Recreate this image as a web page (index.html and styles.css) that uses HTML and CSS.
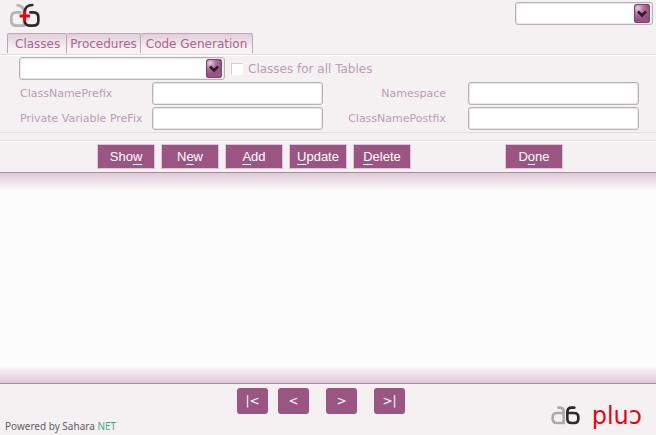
FILE: index.html
```html
<!DOCTYPE html>
<html lang="en">
<head>
<meta charset="utf-8">
<title>a6 plus</title>
<link rel="stylesheet" href="styles.css">
</head>
<body>
<header class="header">
  <svg class="brand" viewBox="0 0 96 78" width="32" height="26" fill="none" stroke-width="8" stroke-linecap="round" aria-hidden="true">
    <path stroke="#b4b4b4" d="M26 7C37 8 45 15 45 28V68H24Q7 68 7 54V43Q7 28 22 28H34"/>
    <path stroke="#2b2b2b" d="M70 6C56 6 47 15 47 28V52Q47 68 62 68H72Q88 68 88 54V43Q88 28 73 28H64"/>
    <path stroke="#e30613" stroke-width="9" stroke-linecap="butt" d="M32 39H63M47 24V54"/>
  </svg>
  <div class="combo combo-top">
    <select aria-label="Connection"><option></option></select>
    <span class="arrow"><svg viewBox="0 0 16 19" width="16" height="19" fill="none" aria-hidden="true"><path d="M4 7.500L8 11.500L12 7.500" stroke="#2b1a27" stroke-width="2.600"/></svg></span>
  </div>
</header>
<nav class="tabs">
  <button class="tab" type="button">Classes</button>
  <button class="tab" type="button">Procedures</button>
  <button class="tab" type="button">Code Generation</button>
</nav>
<form class="panel">
  <div class="source">
    <div class="combo combo-table">
      <select aria-label="Table"><option></option></select>
      <span class="arrow"><svg viewBox="0 0 16 19" width="16" height="19" fill="none" aria-hidden="true"><path d="M4 7.500L8 11.500L12 7.500" stroke="#2b1a27" stroke-width="2.600"/></svg></span>
    </div>
    <input class="check" type="checkbox" id="all">
    <label for="all">Classes for all Tables</label>
  </div>
  <div class="fields">
    <label for="prefix">ClassNamePrefix</label>
    <input class="text" id="prefix" type="text">
    <label class="right" for="ns">Namespace</label>
    <input class="text" id="ns" type="text">
    <label for="private">Private Variable PreFix</label>
    <input class="text" id="private" type="text">
    <label class="right" for="postfix">ClassNamePostfix</label>
    <input class="text" id="postfix" type="text">
  </div>
</form>
<div class="toolbar">
  <button class="action" type="button">Sho<u>w</u></button>
  <button class="action" type="button">N<u>e</u>w</button>
  <button class="action" type="button"><u>A</u>dd</button>
  <button class="action" type="button"><u>U</u>pdate</button>
  <button class="action" type="button"><u>D</u>elete</button>
  <button class="action done" type="button">D<u>o</u>ne</button>
</div>
<main class="canvas"></main>
<footer class="footer">
  <p class="credit">Powered by Sahara <span>NET</span></p>
  <div class="pager">
    <button class="page" type="button">|&lt;</button>
    <button class="page" type="button">&lt;</button>
    <button class="page next" type="button">&gt;</button>
    <button class="page next" type="button">&gt;|</button>
  </div>
  <div class="wordmark">
    <svg viewBox="0 0 87 57" width="29" height="19" fill="none" stroke-width="8" stroke-linecap="round" aria-hidden="true">
      <path stroke="#aaa" d="M22 5H26Q38 5 38 17V51H18Q5 51 5 38V34Q5 21 18 21H36"/>
      <path stroke="#2b2b2b" d="M70 5H62Q49 5 49 18V38Q49 51 62 51H69Q82 51 82 38V34Q82 21 69 21H51"/>
    </svg>
    <span>pluɔ</span>
  </div>
</footer>
</body>
</html>
```

FILE: styles.css
```css
* { box-sizing: border-box; }

body {
  margin: 0;
  min-height: 100vh;
  display: flex;
  flex-direction: column;
  background: #f5f1f3;
  color: #bd9bb3;
  font: 12px/14px "DejaVu Sans", sans-serif;
}

button, select, input { font: inherit; margin: 0; }

.header {
  display: flex;
  justify-content: space-between;
  align-items: flex-start;
  height: 33px;
  padding: 2px 3px 0 9px;
}

.brand { margin-top: 1px; }

.combo { position: relative; height: 23px; }
.combo-top { width: 138px; }
.combo-table { width: 206px; }

.combo select, .text {
  display: block;
  width: 100%;
  height: 23px;
  padding: 0 4px;
  border: 1px solid #b5b3b5;
  border-radius: 3px;
  background: #fff;
  box-shadow: inset 0 0 1px 1px #e6e4e6;
  appearance: none;
}

.arrow {
  position: absolute;
  top: 2px;
  right: 3px;
  height: 19px;
  border-radius: 3px;
  background: radial-gradient(circle at 4px 4px, #e6cede 0, #a9719a 6px, #9a5284 11px);
  box-shadow: inset 0 0 0 1px #74486a;
  pointer-events: none;
}

.arrow svg { display: block; }

.tabs {
  display: flex;
  height: 22px;
  padding-left: 7px;
  border-bottom: 1px solid #e8d9e1;
}

.tab {
  height: 20px;
  padding: 0 3px;
  border: 1px solid #b9a9b4;
  border-bottom: 0;
  border-left-width: 0;
  border-radius: 2px 2px 0 0;
  background: linear-gradient(#e2cdda, #f8f4f6 80%);
  color: #a8648f;
}

.tab:first-child { padding: 0 6px 0 7px; border-left-width: 1px; }
.tab:last-child { padding: 0 5px; }

.panel {
  padding: 1px 17px 2px 20px;
  border-top: 1px solid #fff;
  border-bottom: 1px solid #e6d9e1;
}

.source { display: flex; align-items: center; margin-left: -1px; }

.check {
  appearance: none;
  width: 12px;
  height: 12px;
  margin: 0 5px 0 6px;
  border: 1px solid #fff;
  border-top-color: #dccbd6;
  border-left-color: #dccbd6;
  background: #fff;
}

.fields {
  display: grid;
  grid-template-columns: 132px 1fr 145px 1fr;
  align-items: center;
  row-gap: 2px;
  margin-top: 2px;
  font-size: 11px;
}

.fields label { white-space: nowrap; }
.fields .right { padding-right: 22px; text-align: right; }

.toolbar {
  display: flex;
  gap: 6px;
  margin-top: 7px;
  padding: 3px 0 3px 97px;
  border-top: 1px solid #e6d9e1;
  border-bottom: 1px solid #a88ba0;
  box-shadow: inset 0 1px #fff;
}

.action {
  width: 58px;
  height: 25px;
  padding: 0;
  border: 1px solid #dcc6d4;
  background: #9b5583;
  color: #fff;
  font: 13px/20px "Liberation Sans", Arial, sans-serif;
}

.action u { text-underline-offset: 3px; text-decoration-thickness: 1px; }
.done { margin-left: 88px; }

.canvas {
  flex: 1;
  background:
    linear-gradient(#dfc9d5, #fdfcfd00 18px),
    linear-gradient(0deg, #dfc9d5, #fdfcfd00 18px),
    #fdfcfd;
}

.footer {
  display: grid;
  grid-template-columns: 237px auto 1fr;
  height: 52px;
  border-top: 1px solid #a88ba0;
}

.credit {
  align-self: end;
  margin: 0;
  padding: 0 0 2px 5px;
  color: #636063;
  font: 10px/14px "Noto Sans", sans-serif;
}

.credit span { color: #4ba58e; }

.pager { display: flex; gap: 10px; padding-top: 4px; }

.page {
  width: 31px;
  height: 26px;
  padding: 0;
  border: 0;
  border-radius: 3px;
  background: #9b5583;
  color: #fff;
}

.next { margin-left: 7px; }

.wordmark {
  display: flex;
  justify-content: flex-end;
  align-items: flex-start;
  gap: 12px;
  padding: 22px 14px 0 0;
}

.wordmark span {
  color: #e30613;
  font: 24px/20px "DejaVu Sans", sans-serif;
}
```
